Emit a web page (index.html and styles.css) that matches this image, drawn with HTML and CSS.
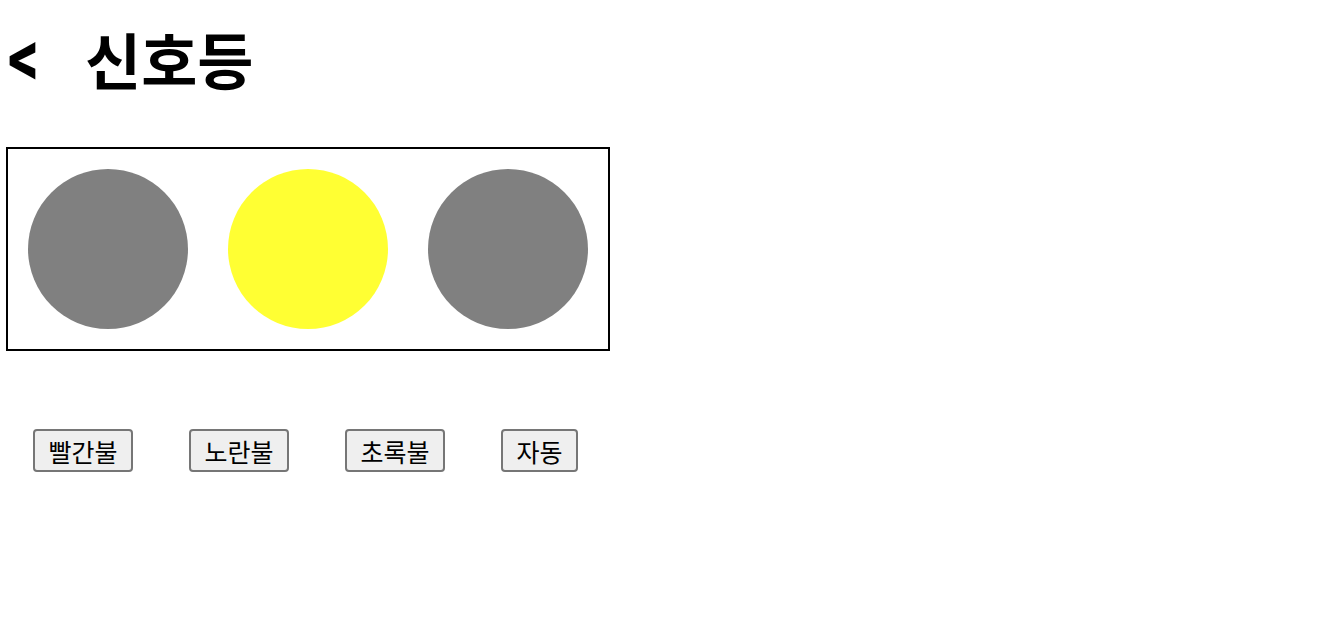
FILE: index.html
```html
<!DOCTYPE html>
<html lang="ko">
<head>
<meta charset="utf-8">
<link rel="stylesheet" href="styles.css">
</head>
<body>
<h1 class="title"><span class="back">&lt;</span><span class="name">신호등</span></h1>
<div class="light-box">
  <div class="lamp off"></div>
  <div class="lamp yellow"></div>
  <div class="lamp off"></div>
</div>
<div class="controls">
  <button class="btn">빨간불</button>
  <button class="btn">노란불</button>
  <button class="btn">초록불</button>
  <button class="btn short">자동</button>
</div>
</body>
</html>
```
FILE: styles.css
```css
body {
  margin: 8px 8px 8px 6px;
  font-family: "Noto Sans CJK KR", "Liberation Sans", sans-serif;
}
.title {
  display: flex;
  align-items: center;
  gap: 46px;
  margin: 4px 0 0 0;
  padding-left: 2px;
  height: 92px;
  font-size: 61px;
  font-weight: 700;
  font-family: "Noto Sans CJK KR", sans-serif;
  line-height: 1;
}
.back {
  display: inline-block;
  font-family: Roboto, sans-serif;
  transform: scaleY(1.3);
}
.light-box {
  display: flex;
  width: 600px;
  height: 200px;
  border: 2px solid #000;
  margin-top: 43px;
}
.lamp {
  width: 160px;
  height: 160px;
  margin: 20px;
  border-radius: 50%;
  background: #808080;
}
.lamp.yellow {
  background: #ffff33;
}
.controls {
  display: flex;
  gap: 56px;
  margin-top: 78px;
  padding-left: 27px;
}
.btn {
  box-sizing: border-box;
  width: 100px;
  height: 43px;
  padding: 0;
  font-family: "Noto Sans CJK KR", sans-serif;
  font-size: 25px;
  background: #efefef;
  border: 2px solid #767676;
  border-radius: 4px;
  color: #000;
}
.btn.short {
  width: 77px;
}
```
